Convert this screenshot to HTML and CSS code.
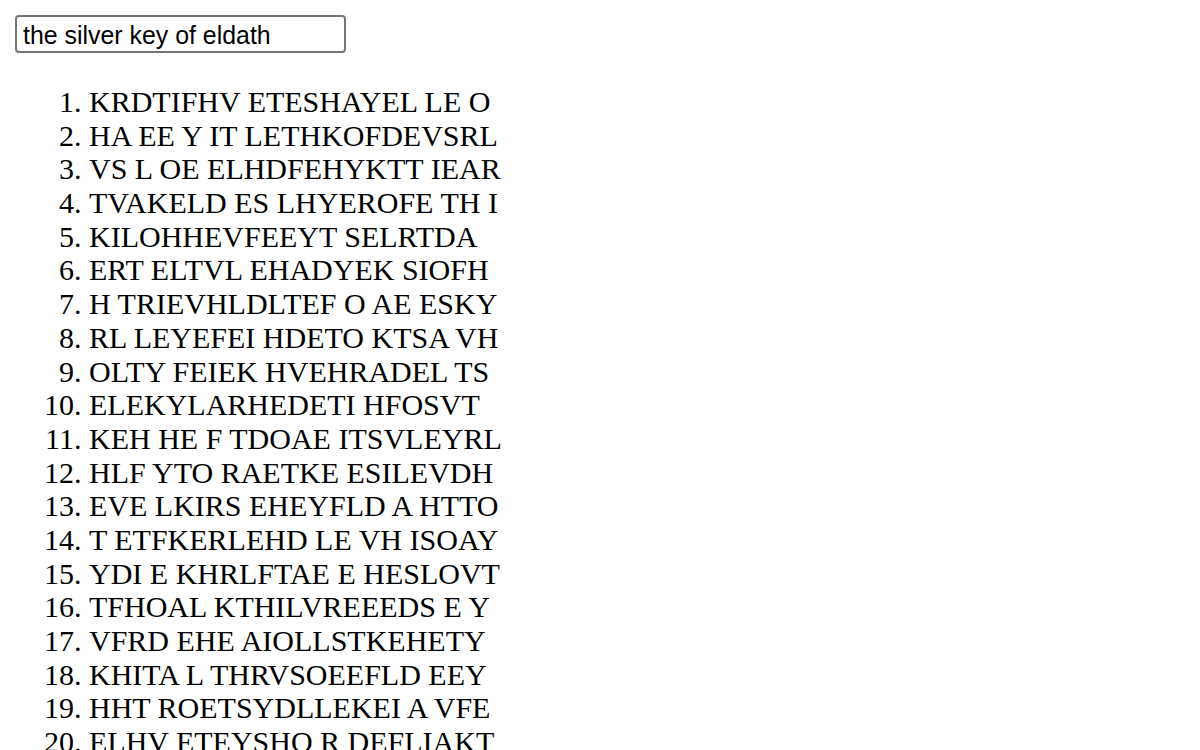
FILE: index.html
```html
<!DOCTYPE html>
<html>
<head>
<meta charset="utf-8">
<link rel="stylesheet" href="styles.css">
</head>
<body>
<div class="search-row"><input class="search" type="text" value="the silver key of eldath"></div>
<ol class="results">
<li>KRDTIFHV ETESHAYEL LE O</li>
<li>HA EE Y IT LETHKOFDEVSRL</li>
<li>VS L OE ELHDFEHYKTT IEAR</li>
<li>TVAKELD ES LHYEROFE TH I</li>
<li>KILOHHEVFEEYT SELRTDA</li>
<li>ERT ELTVL EHADYEK SIOFH</li>
<li>H TRIEVHLDLTEF O AE ESKY</li>
<li>RL LEYEFEI HDETO KTSA VH</li>
<li>OLTY FEIEK HVEHRADEL TS</li>
<li>ELEKYLARHEDETI HFOSVT</li>
<li>KEH HE F TDOAE ITSVLEYRL</li>
<li>HLF YTO RAETKE ESILEVDH</li>
<li>EVE LKIRS EHEYFLD A HTTO</li>
<li>T ETFKERLEHD LE VH ISOAY</li>
<li>YDI E KHRLFTAE E HESLOVT</li>
<li>TFHOAL KTHILVREEEDS E Y</li>
<li>VFRD EHE AIOLLSTKEHETY</li>
<li>KHITA L THRVSOEEFLD EEY</li>
<li>HHT ROETSYDLLEKEI A VFE</li>
<li>ELHV ETEYSHO R DEFLIAKT</li>
</ol>
</body>
</html>
```
FILE: styles.css
```css
html, body {
  background: #ffffff;
}
body {
  margin: 15px;
  font-family: "Liberation Serif", "Times New Roman", serif;
  font-size: 30px;
  color: #000000;
}
.search-row {
  display: flex;
}
.search {
  box-sizing: border-box;
  width: 331px;
  height: 38px;
  margin: 0;
  padding: 4px 6px 2px;
  border: 2px solid #767676;
  border-radius: 4px;
  font-family: "Liberation Sans", Arial, sans-serif;
  font-size: 24.9px;
  color: #000000;
  background: #ffffff;
  outline: none;
}
.results {
  margin: 32px 0 0;
  padding-left: 74px;
}
.results li {
  line-height: 33.68px;
}
```
